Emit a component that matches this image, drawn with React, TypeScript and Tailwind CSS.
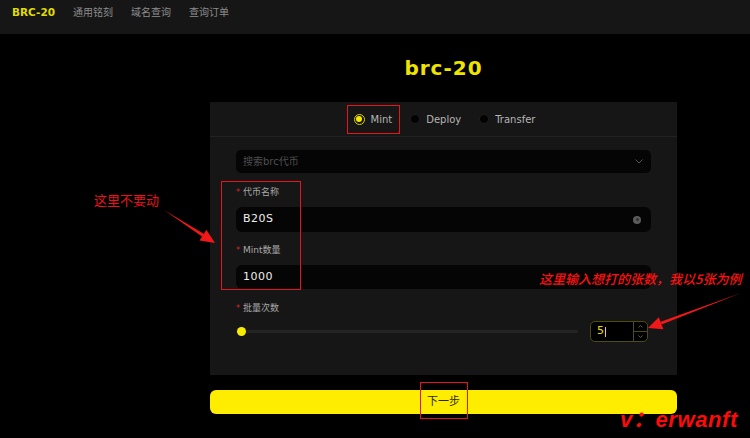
import React from 'react';

const cjk = { fontFamily: '"DejaVu Sans", "Noto Sans CJK SC", sans-serif' };

const Label: React.FC<{ text: string; className?: string }> = ({ text, className }) => (
  <div className={`flex items-center h-[14px] gap-[3px] text-[9px] text-[#a8a8a8] ${className ?? ''}`}>
    <span className="text-[#d4242a] text-[8px] leading-none">*</span>
    <span>{text}</span>
  </div>
);

const Radio: React.FC<{ label: string; checked?: boolean }> = ({ label, checked }) => (
  <div className="flex items-center gap-[6px]">
    {checked ? (
      <span className="w-[11px] h-[11px] rounded-full border border-[#d9d200] flex items-center justify-center">
        <span className="w-[6px] h-[6px] rounded-full bg-[#f5ea00]" />
      </span>
    ) : (
      <span className="w-[10px] h-[10px] rounded-full bg-[#020202] border border-[#1e1e1e]" />
    )}
    <span className="text-[10px] text-[#b4b4b4]">{label}</span>
  </div>
);

export default function App() {
  return (
    <div className="relative w-[750px] h-[438px] bg-black overflow-hidden" style={cjk}>
      {/* Top nav */}
      <div className="h-[34px] bg-[#161616] flex items-start pt-[6px] px-[12px] gap-[18px] leading-[13px]">
        <span className="text-[10.5px] font-bold text-[#e0dc00]">BRC-20</span>
        <span className="text-[10px] text-[#8c8c8c]">通用铭刻</span>
        <span className="text-[10px] text-[#8c8c8c]">域名查询</span>
        <span className="text-[10px] text-[#8c8c8c]">查询订单</span>
      </div>

      <div className="ml-[210px] w-[467px]">
        <div className="mt-[22px] h-[24px] leading-[24px] text-center text-[20px] font-bold tracking-[1px] text-[#efe400]">brc-20</div>

        {/* Card */}
        <div className="mt-[22px] bg-[#161616]">
          <div className="h-[35px] border-b border-[#222] flex items-center justify-center gap-[18px] pl-[2px]">
            <Radio label="Mint" checked />
            <Radio label="Deploy" />
            <Radio label="Transfer" />
          </div>

          <div className="px-[26px] pt-[13px] pb-[33px]">
            <div className="h-[23px] rounded-[5px] bg-[#050505] flex items-center justify-between pl-[7px] pr-[8px]">
              <span className="text-[10px] text-[#4e4e4e]">搜索brc代币</span>
              <svg width="8" height="5" viewBox="0 0 8 5" fill="none">
                <path d="M0.5 0.5 L4 4 L7.5 0.5" stroke="#555" strokeWidth="1" />
              </svg>
            </div>

            <Label text="代币名称" className="mt-[13px]" />
            <div className="mt-[7px] h-[25px] rounded-[6px] bg-[#050505] flex items-center justify-between pl-[7px] pr-[10px]">
              <span className="text-[11px] text-[#eee] tracking-[0.5px]">B20S</span>
              <span className="w-[8px] h-[8px] rounded-full bg-[#5c5c5c] flex items-center justify-center">
                <span className="w-[3px] h-[3px] rounded-full bg-[#333]" />
              </span>
            </div>

            <Label text="Mint数量" className="mt-[12px]" />
            <div className="mt-[7px] h-[24px] rounded-[6px] bg-[#050505] flex items-center pl-[7px]">
              <span className="text-[11px] text-[#eee] tracking-[0.5px]">1000</span>
            </div>

            <Label text="批量次数" className="mt-[13px]" />
            <div className="mt-[5px] h-[21px] flex items-center gap-[12px] pr-[3px]">
              <div className="relative flex-1 h-[3px] rounded-full bg-[#242424]">
                <span className="absolute left-[1px] top-[-3px] w-[9px] h-[9px] rounded-full bg-[#f7ec00]" />
              </div>
              <div className="w-[58px] h-[21px] rounded-[5px] border border-[#4f4c10] bg-black flex">
                <div className="flex-1 flex items-center pl-[6px]">
                  <span className="text-[11px] text-[#e8dd00]">5</span>
                  <span className="w-[1px] h-[10px] bg-[#e8dd00] ml-[1px]" />
                </div>
                <div className="w-[14px] border-l border-[#4f4c10] flex flex-col">
                  <div className="flex-1 flex items-center justify-center border-b border-[#4f4c10]">
                    <svg width="5" height="3" viewBox="0 0 5 3" fill="none">
                      <path d="M0.5 2.5 L2.5 0.5 L4.5 2.5" stroke="#7a7630" strokeWidth="0.8" />
                    </svg>
                  </div>
                  <div className="flex-1 flex items-center justify-center">
                    <svg width="5" height="3" viewBox="0 0 5 3" fill="none">
                      <path d="M0.5 0.5 L2.5 2.5 L4.5 0.5" stroke="#7a7630" strokeWidth="0.8" />
                    </svg>
                  </div>
                </div>
              </div>
            </div>
          </div>
        </div>

        <button className="mt-[15px] w-full h-[24px] rounded-[6px] bg-[#ffed00] flex items-center justify-center text-[11px] text-[#2a2a00]">
          下一步
        </button>
      </div>

      {/* Annotations */}
      <div className="absolute left-[347px] top-[105px] w-[53px] h-[29px] border-[1.5px] border-[#e8141c]" />
      <div className="absolute left-[221px] top-[181px] w-[80px] h-[109px] border-[1.5px] border-[#e8141c]" />
      <div className="absolute left-[420px] top-[382px] w-[48px] h-[37px] border-[1.5px] border-[#e8141c]" />

      <div className="absolute left-[94px] top-[193px] text-[13px] leading-none text-[#e8141c]" style={{ fontFamily: '"Noto Sans CJK SC", sans-serif' }}>
        这里不要动
      </div>
      <div className="absolute left-[539px] top-[272px] text-[13px] leading-none italic font-medium text-[#ff1010]" style={{ fontFamily: '"Noto Sans CJK SC", sans-serif' }}>
        这里输入想打的张数，我以5张为例
      </div>
      <div className="absolute left-[620px] top-[409px] text-[22px] leading-none italic font-bold tracking-[0.6px] text-[#ff0a0a]" style={{ fontFamily: '"Liberation Sans", "Noto Sans CJK SC", sans-serif' }}>
        v：erwanft
      </div>

      <svg className="absolute left-0 top-0 pointer-events-none" width="750" height="438" viewBox="0 0 750 438">
        <polygon points="164,210 202.4,236.7 204,234.1" fill="#f01818" />
        <polygon points="215,243 199.5,240.6 206.4,229.8" fill="#f01818" />
        <polygon points="741,293 660.6,321.7 661.6,324.5" fill="#f01818" />
        <polygon points="648,328 658.8,317.2 663.4,329.2" fill="#f01818" />
      </svg>
    </div>
  );
}
